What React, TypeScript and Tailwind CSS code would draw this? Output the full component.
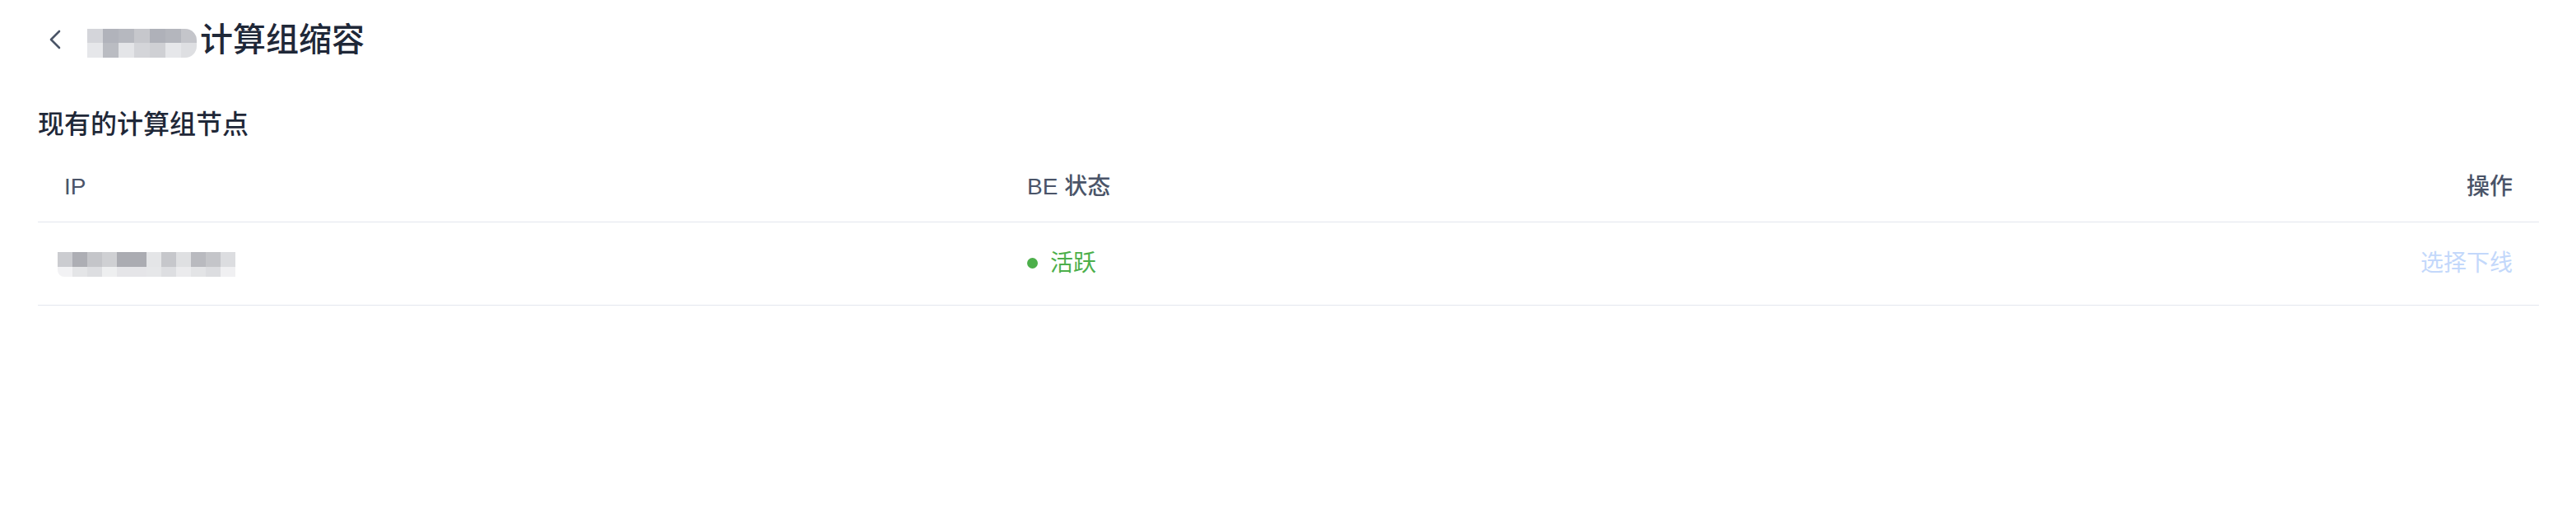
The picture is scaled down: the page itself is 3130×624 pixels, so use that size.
const titleBlur = [
  ["#d4d5da", "#b1b3bb", "#b6b8bf", "#c6c7cc", "#afb1b9", "#b4b6bd", "#c4c5ca"],
  ["#e6e7ea", "#babcc2", "#e4e5e8", "#d4d5d9", "#cfd0d4", "#e6e7ea", "#dedfe2"],
]

const ipBlur = [
  ["#cbccd0", "#adaeb4", "#c4c5c9", "#cfd0d3", "#abacb2", "#abacb2", "#e4e5e7", "#c6c7cb", "#dfe0e2", "#b9babf", "#c4c5c9", "#dcdde0"],
  ["#f2f2f4", "#e4e5e7", "#dddee1", "#eeeff0", "#e5e5e8", "#e5e5e8", "#e6e7e9", "#dddee1", "#ebebed", "#e3e4e6", "#dcdde0", "#f0f0f2"],
]

function BlurBox({ rows, heights, cell, rounded }: { rows: string[][]; heights: string[]; cell: string; rounded: string }) {
  return (
    <div className={`flex flex-col overflow-hidden ${rounded}`}>
      {rows.map((row, i) => (
        <div key={i} className={`flex ${heights[i]}`}>
          {row.map((c, j) => (
            <div key={j} className={`${cell} h-full`} style={{ backgroundColor: c }} />
          ))}
        </div>
      ))}
    </div>
  )
}

export default function App() {
  return (
    <div
      className="min-h-screen bg-white px-[46px] pr-[45px]"
      style={{ fontFamily: '"Liberation Sans", "Noto Sans CJK SC", sans-serif' }}
    >
      {/* Page title */}
      <div className="flex items-center h-[96px] pl-[14px]">
        <svg width="14" height="24" viewBox="0 0 14 24" fill="none" className="shrink-0">
          <polyline points="12,2 2,12 12,22" stroke="#4b5567" strokeWidth="2.6" strokeLinecap="round" strokeLinejoin="round" />
        </svg>
        <div className="ml-[32px] mt-[8px]">
          <BlurBox rows={titleBlur} heights={["h-[17px]", "h-[18px]"]} cell="w-[19px]" rounded="rounded-r-[14px]" />
        </div>
        <h1 className="ml-[4px] text-[40px] leading-[48px] font-medium text-[#1f2838]">计算组缩容</h1>
      </div>

      {/* Section */}
      <h2 className="mt-[33px] text-[32px] leading-[44px] font-medium text-[#1f2838]">现有的计算组节点</h2>

      <table className="mt-[12px] w-full border-collapse">
        <thead>
          <tr className="h-[84px] border-b border-[#e3e6ee]">
            <th className="w-[1202px] pl-[32px] text-left text-[28px] font-medium text-[#4a5468]">IP</th>
            <th className="text-left text-[28px] font-medium text-[#4a5468]">BE 状态</th>
            <th className="pr-[32px] text-right text-[28px] font-medium text-[#4a5468]">操作</th>
          </tr>
        </thead>
        <tbody>
          <tr className="h-[101px] border-b border-[#e3e6ee]">
            <td className="pl-[24px]">
              <div className="pt-[3px]">
                <BlurBox rows={ipBlur} heights={["h-[18px]", "h-[12px]"]} cell="w-[18px]" rounded="rounded-b-[8px]" />
              </div>
            </td>
            <td>
              <div className="flex items-center text-[28px] text-[#4caf4a]">
                <span className="w-[13px] h-[13px] rounded-full bg-[#4caf4a]" />
                <span className="ml-[15px]">活跃</span>
              </div>
            </td>
            <td className="pr-[32px] text-right">
              <span className="text-[28px] text-[#c3d8fb]">选择下线</span>
            </td>
          </tr>
        </tbody>
      </table>
    </div>
  )
}
